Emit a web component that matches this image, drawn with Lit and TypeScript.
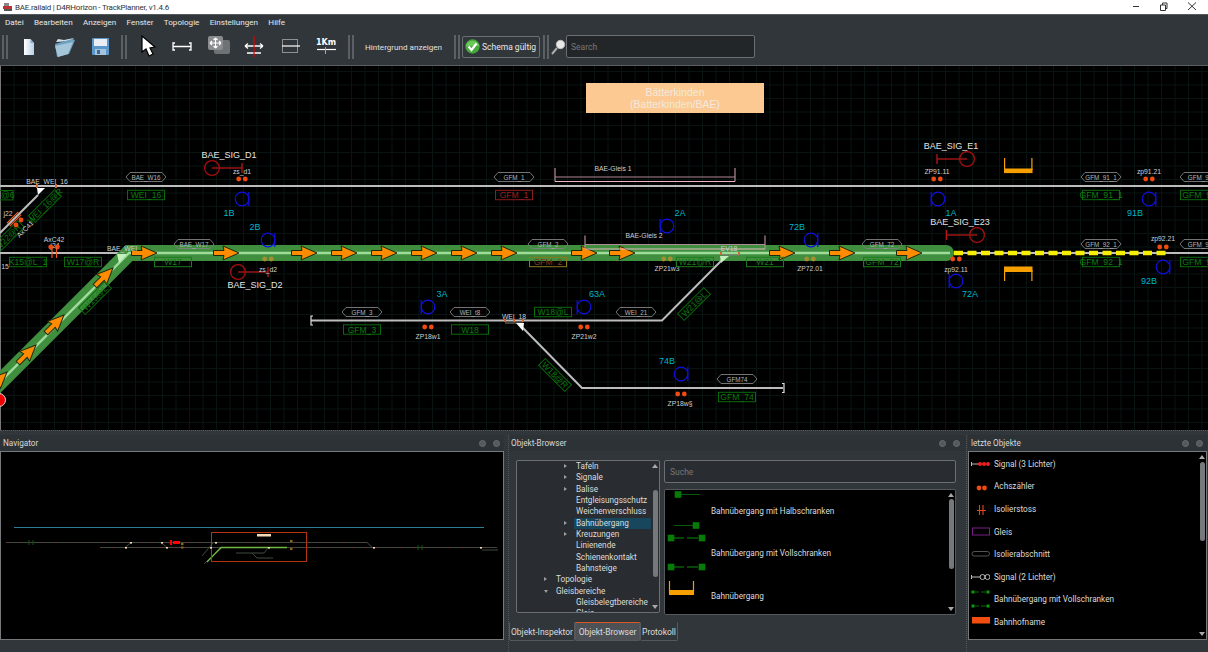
import { LitElement, html, css, svg } from "lit";
import { customElement } from "lit/decorators.js";

const label = (x: number, y: number, s: string, cls = "lbl") =>
  svg`<text x=${x} y=${y} class=${cls} text-anchor="middle" dominant-baseline="central">${s}</text>`;

const hex = (cx: number, cy: number, s: string) => svg`
  <polygon class="hex" points="${cx - 20},${cy} ${cx - 16},${cy - 4.5} ${cx + 16},${cy - 4.5} ${cx + 20},${cy} ${cx + 16},${cy + 4.5} ${cx - 16},${cy + 4.5}"/>
  ${label(cx, cy, s, "hext")}`;

const box = (cx: number, cy: number, s: string, kind = "g", rot = 0) => svg`
  <g transform="translate(${cx} ${cy}) rotate(${rot})">
    <rect class="box-${kind}" x="-18.5" y="-4.7" width="37" height="9.4"/>
    <text class="boxt-${kind}" text-anchor="middle" dominant-baseline="central">${s}</text>
  </g>`;

const dots = (cx: number, cy: number, cls = "dot") => svg`
  <circle class=${cls} cx=${cx - 3.3} cy=${cy} r="2.4"/><circle class=${cls} cx=${cx + 3.3} cy=${cy} r="2.4"/>`;

const balise = (cx: number, cy: number, side: number, s: string, lx: number, ly: number) => svg`
  <circle class="bal" cx=${cx} cy=${cy} r="6.8"/>
  <line class="bal" x1=${cx + side * 6.8} x2=${cx + side * 6.8} y1=${cy - 7} y2=${cy + 7}/>
  ${label(lx, ly, s, "cy")}`;

const signal = (cx: number, cy: number, barX: number, name: string, nx: number, ny: number) => svg`
  <line class="sig" x1=${barX} x2=${cx} y1=${cy} y2=${cy}/>
  <line class="sig" x1=${barX} x2=${barX} y1=${cy - 5} y2=${cy + 5}/>
  <circle class="sigc" cx=${cx} cy=${cy} r="7.4"/>
  ${label(nx, ny, name, "sign")}`;

const arrow = (x: number, y: number, rot = 0) => svg`
  <path class="arr" transform="translate(${x} ${y}) rotate(${rot})" d="M0,0 L-16,-7 L-15,-2.5 L-25.5,-2.5 L-25.5,2.5 L-15,2.5 L-16,7 Z"/>`;

const endcap = (x: number, y: number, dir: number) => svg`
  <path class="cap" d="M${x + dir * 2},${y - 4.5} H${x} V${y + 4.5} H${x + dir * 2}"/>`;

const bracket = (x1: number, x2: number, y: number) => svg`
  <path class="pl1" d="M${x1},${y - 9} V${y + 4.5} M${x2},${y - 9} V${y + 4.5} M${x1},${y} H${x2}"/>
  <path class="pl2" d="M${x1},${y + 4.5} H${x2}"/>`;

const sq = (x: number, y: number) => svg`<rect class="gs" x=${x - 3.3} y=${y - 3.3} width="6.6" height="6.6"/>`;

const TREE: [string, number, string][] = [
  ["Tafeln", 2, "r"], ["Signale", 2, "r"], ["Balise", 2, "r"], ["Entgleisungsschutz", 2, ""],
  ["Weichenverschluss", 2, ""], ["Bahnübergang", 2, "r"], ["Kreuzungen", 2, "r"], ["Linienende", 2, ""],
  ["Schienenkontakt", 2, ""], ["Bahnsteige", 2, ""], ["Topologie", 1, "r"], ["Gleisbereiche", 1, "d"],
  ["Gleisbelegtbereiche", 2, ""], ["Gleis", 2, ""],
];

const NAVMARKS: [number, number][] = [[130, 542], [125, 547], [161, 542], [166, 547], [210, 547], [215, 542], [268, 547], [373, 547], [480, 547]];

@customElement("app-root")
export class AppRoot extends LitElement {
  static styles = css`
    :host { display: block; width: 1208px; height: 652px; overflow: hidden; background: #31363b;
      font-family: Roboto, "Liberation Sans", Arial, sans-serif; font-size: 8.2px; color: #eff0f1; }
    .root { display: flex; flex-direction: column; width: 1208px; height: 652px; }
    .title { height: 14px; background: #fff; color: #333; display: flex; align-items: center; padding-left: 3px; gap: 2px; flex: none; font-size: 8px; letter-spacing: -0.22px; }
    .title .grow { flex: 1; }
    .title svg { display: block; }
    .winbtns { display: flex; }
    .winbtns svg { width: 29px; height: 14px; }
    .menu { height: 13px; border-top: 1px solid #55585b; background: #31363b; display: flex; align-items: center; padding-left: 5px; gap: 10.3px; flex: none; color: #e8e8e8; font-size: 8.1px; }
    .tool { height: 37px; border-bottom: 1px solid #5a5e62; background: #31363b; display: flex; align-items: center; flex: none; position: relative; }
    .sep { width: 2px; height: 24px; border-left: 2px solid #5c6064; border-right: 2px solid #5c6064; flex: none; background: #31363b; box-sizing: content-box; }
    .icons { display: flex; align-items: center; }
    .icons svg { display: block; flex: none; }
    .spacer { width: 2px; flex: none; }
    .gap4 { margin-left: 4px; }
    .gap2 { margin-left: 2px; }
    .gap1 { margin-left: 1px; }
    .bg-lbl { width: 97px; text-align: center; flex: none; color: #e0e0e0; font-size: 8.1px; }
    .schema { width: 78px; height: 22px; margin: 0 3px 0 2px; border: 1px solid #6b6f73; border-radius: 2px; display: flex; align-items: center; gap: 2px; padding-left: 2px; box-sizing: border-box; flex: none; color: #e8e8e8; white-space: nowrap; font-size: 8.5px; }
    .mag { margin-left: 2px; flex: none; }
    .search { width: 189px; height: 23px; background: #232629; border: 1px solid #6b6f73; border-radius: 2px; box-sizing: border-box; display: flex; align-items: center; padding-left: 4px; color: #777; flex: none; font-size: 8.5px; }
    .canvas { height: 364px; flex: none; display: block; background: #000; width: 1208px; }
    .docks { flex: 1; display: flex; min-height: 0; border-top: 1px dotted #555a5e; box-sizing: border-box; padding-top: 4px; }
    .panel { display: flex; flex-direction: column; flex: none; height: 100%; box-sizing: border-box; }
    .nav { width: 504px; }
    .browser { width: 458px; margin-left: 4px; padding-left: 1px; border-left: 1px dotted #50555a; }
    .last { width: 241px; border-left: 1px dotted #50555a; padding-left: 1px; }
    .phead { height: 16px; flex: none; display: flex; align-items: center; justify-content: space-between; padding: 0 4px 0 3px; background: #2d3237; color: #d8d8d8; }
    .browser .phead { padding: 0 6px 0 1px; }
    .pbtns { display: flex; gap: 7px; }
    .pbtn { width: 7px; height: 7px; border-radius: 50%; background: #55595d; border: 1.5px solid #696d71; box-sizing: border-box; }
    .frame { height: 189px; flex: none; background: #000; border: 1px solid #76797c; box-sizing: border-box; position: relative; overflow: hidden; }
    .frame svg { display: block; }
    .frame-r { width: 239px; }
    .bbody { height: 171px; flex: none; display: flex; padding: 9px 8px 0 6px; gap: 4px; box-sizing: border-box; }
    .tree { width: 144px; height: 153px; flex: none; background: #292d31; border: 1px solid #6b6f73; border-radius: 2px; box-sizing: border-box; display: flex; overflow: hidden; }
    .rows { flex: 1; min-width: 0; overflow: hidden; }
    .row { height: 11.33px; line-height: 11.33px; position: relative; color: #dcdcdc; white-space: nowrap; }
    .row.sel { background: #18465d; margin-left: 57px; }
    .row.l2 { padding-left: 59px; }
    .row.l1 { padding-left: 39px; }
    .row.sel.l2 { padding-left: 2px; }
    .tw { position: absolute; top: 3px; width: 0; height: 0; }
    .tw.r { border-left: 3px solid #9a9da0; border-top: 2.5px solid transparent; border-bottom: 2.5px solid transparent; }
    .tw.d { border-top: 3px solid #9a9da0; border-left: 2.5px solid transparent; border-right: 2.5px solid transparent; top: 4px; }
    .sbar { width: 8px; flex: none; position: relative; }
    .thumb { width: 5px; background: #76797c; border-radius: 3px; position: absolute; left: 1.5px; }
    .t1 { top: 29px; height: 87px; }
    .t2 { top: 9px; height: 70px; }
    .t3 { top: 10px; height: 79px; }
    .up { position: absolute; top: 3px; left: 1px; width: 0; height: 0; border-left: 3px solid transparent; border-right: 3px solid transparent; border-bottom: 4px solid #a8a8a8; }
    .down { position: absolute; bottom: 3px; left: 1px; width: 0; height: 0; border-left: 3px solid transparent; border-right: 3px solid transparent; border-top: 4px solid #a8a8a8; }
    .bright { width: 292px; flex: none; display: flex; flex-direction: column; gap: 6px; }
    .suche { height: 23px; flex: none; background: #292d31; border: 1px solid #6b6f73; border-radius: 2px; box-sizing: border-box; display: flex; align-items: center; padding-left: 5px; color: #777; font-size: 8.5px; }
    .list { height: 126px; flex: none; background: #000; border: 1px solid #55585c; border-radius: 2px; box-sizing: border-box; display: flex; }
    .litems { flex: 1; display: flex; flex-direction: column; min-width: 0; }
    .litem { height: 42.7px; display: flex; align-items: center; gap: 5px; flex: none; color: #dcdcdc; }
    .litem.first { height: 42px; }
    .litem svg { flex: none; display: block; }
    .tabs { display: flex; margin-left: -1px; height: 19px; flex: none; font-size: 8.5px; }
    .tab { height: 19px; border: 1px solid #55595d; border-top: 1px solid #31363b; box-sizing: border-box; display: flex; align-items: center; justify-content: center; color: #dcdcdc; border-radius: 0 0 2px 2px; white-space: nowrap; }
    .tab.on { background: #4d5156; border-top: 1px solid #d85a20; }
    .w66 { width: 66px; } .w65 { width: 65px; } .w38 { width: 38px; }
    .rlist { display: flex; height: 100%; }
    .ritems { flex: 1; display: flex; flex-direction: column; padding-top: 0.5px; }
    .ritem { height: 22.6px; flex: none; display: flex; align-items: center; gap: 4px; padding-left: 2px; color: #dcdcdc; }
    .ritem svg { flex: none; display: block; }

    .gridl { stroke: #081412; stroke-width: 1; fill: none; }
    .trk { stroke: #bdbdbd; stroke-width: 2; fill: none; }
    .band { stroke: #3f8f3f; stroke-width: 16; fill: none; stroke-linejoin: miter; stroke-linecap: round; }
    .inner { stroke: #9fdc9a; stroke-width: 2.4; fill: none; }
    .yel { stroke: #f6f000; stroke-width: 4.6; stroke-dasharray: 9 4.5; fill: none; }
    .arr { fill: #ff8c00; stroke: #1c2a10; stroke-width: 1; stroke-linejoin: miter; }
    .hex { fill: none; stroke: #808080; stroke-width: 0.9; }
    .hext { fill: #b4b4b4; font-size: 6.3px; font-family: "Liberation Sans", sans-serif; }
    .lbl { fill: #d0d0d0; font-size: 6.8px; font-family: "Liberation Sans", sans-serif; }
    .cy { fill: #00b4c8; font-size: 9px; font-family: "Liberation Sans", sans-serif; }
    .sign { fill: #e4e4e4; font-size: 9px; font-family: "Liberation Sans", sans-serif; }
    .sig { stroke: #b51818; stroke-width: 1.3; }
    .sigc { fill: none; stroke: #a80e0e; stroke-width: 1.3; }
    .bal { fill: none; stroke: #1010e0; stroke-width: 1.2; }
    .dot { fill: #f04a10; }
    .dotd { fill: #a49030; }
    .box-g { fill: none; stroke: #0a6a0a; stroke-width: 1; }
    .boxt-g { fill: #0d7a0d; font-size: 8.6px; font-family: "Liberation Sans", sans-serif; }
    .box-r { fill: none; stroke: #8a1c1c; stroke-width: 1; }
    .boxt-r { fill: #9a1f1f; font-size: 8.6px; font-family: "Liberation Sans", sans-serif; }
    .box-o { fill: none; stroke: #8a7a20; stroke-width: 1; }
    .boxt-o { fill: #8a3a20; font-size: 8.6px; font-family: "Liberation Sans", sans-serif; }
    .box-s { fill: none; stroke: #1b7a1b; stroke-width: 1; }
    .boxt-s { fill: #1b7a1b; font-size: 8.6px; font-family: "Liberation Sans", sans-serif; }
    .pl1 { fill: none; stroke: #b08a96; stroke-width: 1.2; }
    .pl2 { fill: none; stroke: #e8b8c2; stroke-width: 1; }
    .cap { fill: none; stroke: #ddd; stroke-width: 1.2; }
    .ub { fill: #f5a000; }
    .ubl { stroke: #f5a000; stroke-width: 1.2; }
    .stn { fill: #fdc992; }
    .stnt { fill: #f0e9dd; font-size: 10.5px; font-family: "Liberation Sans", sans-serif; }
    .iso { stroke: #f05a20; stroke-width: 1.2; }
    .sw { fill: #fff; }
    .swg { fill: #c4f0bc; }
    .tick { fill: #d06a30; }
    .swb { fill: none; stroke: #808080; stroke-width: 1; }
    .gs { fill: #087a08; }
    .gl { stroke: #075a07; stroke-width: 1; }
    .gl2 { stroke: #0a8a0a; stroke-width: 1; }
    .nl1 { stroke: #2c7f92; stroke-width: 1; }
    .nl2 { stroke: #3e4a3e; stroke-width: 1; fill: none; }
    .nl3 { stroke: #5a3a38; stroke-width: 1; stroke-dasharray: 3 9; fill: none; }
    .nl4 { stroke: #70b840; stroke-width: 1.3; fill: none; }
    .nb { fill: none; stroke: #b5340f; stroke-width: 1; }
    .nw { fill: #f2d9b8; }
    .nred { fill: #f00; }
    .nor { fill: #8a6a10; }
    .ng { stroke: #0a5a0a; fill: none; }
    .ico-w { stroke: #fff; fill: none; }
    .kmt { fill: #fff; font-size: 8px; font-weight: 700; font-family: "DejaVu Sans", sans-serif; }
    .redl { stroke: #e00000; stroke-width: 1.2; }
  `;

  private track() {
    const g: unknown[] = [];
    for (let x = 0.5; x < 1208; x += 13.5) g.push(svg`<line class="gridl" x1=${x} x2=${x} y1="66" y2="430"/>`);
    for (let y = 71.5; y < 430; y += 13.5) g.push(svg`<line class="gridl" x1="0" x2="1208" y1=${y} y2=${y}/>`);
    const tips = [157, 239, 317, 357, 397, 437, 477, 517, 597, 635, 795, 855, 922];
    return svg`
    <svg class="canvas" viewBox="0 66 1208 364" width="1208" height="364">
      ${g}
      <line x1="0.5" x2="0.5" y1="66" y2="430" stroke="#777"/>
      <rect class="stn" x="586" y="83" width="178" height="30"/>
      ${label(675, 91.5, "Bätterkinden", "stnt")}${label(675, 103.5, "(Batterkinden/BAE)", "stnt")}

      <line class="trk" x1="0" x2="1208" y1="186" y2="186"/>
      <line class="trk" x1="0" x2="120" y1="253" y2="253"/>
      <line class="trk" x1="950" x2="1208" y1="253" y2="253"/>
      <line class="trk" x1="38" y1="195" x2="0" y2="233"/>

      <polyline class="band" points="-30,412 129,253 946,253"/>
      <polyline class="inner" points="-30,412 129,253 950,253"/>
      <line class="yel" x1="954" x2="1166" y1="253" y2="253"/>
      <polygon class="swg" points="117,254 127,254 119,263"/>
      ${tips.map((x) => arrow(x, 253))}
      ${[[113, 268], [64, 315], [36, 345], [7, 372]].map(([x, y]) => arrow(x, y, -45))}

      <polyline class="trk" points="311,320.5 662,320.5 722,260"/>
      <polyline class="trk" points="521,326 582,388 783,388"/>
      ${endcap(311, 320.5, 1)}${endcap(784, 388, -1)}

      ${bracket(555, 735, 177)}${label(613, 168, "BAE-Gleis 1")}
      ${bracket(585, 765, 244.5)}${label(644, 235, "BAE-Gleis 2")}

      ${label(47, 181, "BAE_WEI_16")}
      <rect class="tick" x="36" y="184" width="2" height="4"/><rect class="tick" x="55" y="184" width="2" height="4"/>
      <polygon class="sw" points="37,188 45,188 38,195"/>
      <rect class="box-g" x="-1" y="190.5" width="14" height="9.4"/><text class="boxt-g" x="1" y="198">@6</text>
      ${hex(146, 177, "BAE_W16")}${box(146, 195, "WEI_16")}
      ${box(45, 206, "WEI_16@R", "g", -45)}${box(8, 237, "W22@R", "g", -45)}
      ${hex(514, 177, "GFM_1")}${box(514, 195, "GFM_1", "r")}

      ${signal(212, 168, 242, "BAE_SIG_D1", 229, 155)}
      ${label(242, 171, "zs_d1")}${dots(242, 179)}
      ${balise(242, 199, 1, "1B", 229, 213)}${balise(268, 240, 1, "2B", 255, 227)}
      ${signal(238, 272, 268, "BAE_SIG_D2", 255, 285)}
      ${label(268, 269, "zs_d2")}${dots(268, 259, "dotd")}

      ${label(8, 213, "j22")}
      <g transform="rotate(-45 14 219)"><line class="iso" x1="6" x2="22" y1="217" y2="217"/><line class="iso" x1="6" x2="22" y1="221" y2="221"/></g>
      <circle class="dot" cx="16" cy="225" r="2.4"/><circle class="dot" cx="21" cy="220" r="2.4"/>
      <text class="lbl" transform="translate(25 229) rotate(-45)" text-anchor="middle" dominant-baseline="central">AxC41</text>
      ${label(54, 239, "AxC42")}${label(55, 245.5, "j24", "lbl")}${dots(54, 247)}
      <line class="iso" x1="52" x2="52" y1="247" y2="258"/><line class="iso" x1="56.5" x2="56.5" y1="247" y2="258"/>
      ${label(5, 266, "15")}${box(28, 262, "K15@L_1")}${box(83, 262, "W17@R")}
      ${label(122, 248, "BAE_WEI")}
      ${hex(194, 244, "BAE_W17")}${box(173, 262, "W17", "s")}
      ${box(95, 298, "W15@L", "g", -45)}
      ${hex(548, 244, "GFM_2")}${box(548, 262, "GFM_2", "o")}

      ${balise(667, 226, -1, "2A", 680, 213)}
      ${label(667, 268.5, "ZP21w3")}${dots(667, 259, "dotd")}
      ${box(695, 262, "W21@R", "s")}${box(765, 262, "W21", "s")}
      ${label(729, 248, "EV18")}
      <path class="swb" d="M721,255 H739"/>
      <rect class="tick" x="720" y="252" width="2" height="3"/><rect class="tick" x="738" y="252" width="2" height="3"/>
      <polygon class="swg" points="720,256 729,256 721,263"/>
      ${box(694, 304, "W21@L", "g", -45)}
      ${balise(811, 240, 1, "72B", 797, 227)}
      ${label(810, 268.5, "ZP72.01")}${dots(810, 259, "dotd")}
      ${hex(882, 244, "GFM_72")}${box(882, 262, "GFM_72", "s")}

      ${signal(967, 159, 937, "BAE_SIG_E1", 951, 146)}
      ${label(937, 171, "ZP91.11")}${dots(937, 179)}
      ${balise(938, 199, -1, "1A", 951, 213)}
      ${signal(977, 235, 946.5, "BAE_SIG_E23", 960, 222)}
      ${dots(956, 259)}${label(956, 269, "zp92.11")}
      ${balise(956, 281, -1, "72A", 970, 294)}

      <rect class="ub" x="1004" y="168.5" width="28.5" height="4.6"/>
      <line class="ubl" x1="1004.6" x2="1004.6" y1="158" y2="170"/><line class="ubl" x1="1031.9" x2="1031.9" y1="158" y2="170"/>
      <rect class="ub" x="1004" y="266.5" width="28.5" height="5.5"/>
      <line class="ubl" x1="1004.6" x2="1004.6" y1="270" y2="281"/><line class="ubl" x1="1031.9" x2="1031.9" y1="270" y2="281"/>

      ${hex(1101, 177, "GFM_91_1")}${box(1101, 195, "GFM_91_1")}
      ${label(1149, 171, "zp91.21")}${dots(1149, 179)}
      ${balise(1149, 199, 1, "91B", 1135, 213)}
      ${hex(1200, 177, "GFM_91")}${box(1199, 195, "GFM_91")}
      ${hex(1101, 244, "GFM_92_1")}${box(1101, 262, "GFM_92_1")}
      ${label(1163, 238, "zp92.21")}${dots(1163, 247)}
      ${balise(1163, 267, 1, "92B", 1149, 281)}
      ${hex(1200, 244, "GFM_92")}${box(1199, 262, "GFM_92")}

      ${hex(362, 312, "GFM_3")}${box(362, 329.5, "GFM_3")}
      ${balise(428, 307, -1, "3A", 442, 294)}${dots(428, 327)}${label(428, 336, "ZP18w1")}
      ${hex(470, 312, "WEI_t8")}${box(470, 329.5, "W18")}
      ${label(514, 316, "WEI_18")}
      <path class="swb" d="M505,323 H523"/>
      <rect class="tick" x="504" y="319" width="2" height="3"/><rect class="tick" x="513" y="319" width="2" height="3"/><rect class="tick" x="522" y="319" width="2" height="3"/>
      <polygon class="sw" points="516,323 524,323 523,331"/>
      ${box(553, 312, "W18@L")}
      ${balise(584, 307, -1, "63A", 597, 294)}${dots(584, 327)}${label(584, 336, "ZP21w2")}
      ${hex(636, 312, "WEI_21")}
      ${box(555, 375, "W18@R", "g", 45)}
      ${balise(681, 374, 1, "74B", 667, 361)}${dots(681, 394)}${label(680, 403.5, "ZP18w§")}
      ${hex(737, 379, "GFM74")}${box(737, 397, "GFM_74")}

      <circle cx="-1" cy="400" r="6.5" fill="#f00000" stroke="#ddd" stroke-width="1"/>
    </svg>`;
  }

  private navigator() {
    return svg`
    <svg width="502" height="187" viewBox="1 452 502 187">
      <line class="nl1" x1="14" x2="484" y1="527.5" y2="527.5"/>
      <line class="nl2" x1="6" x2="367" y1="542.5" y2="542.5"/>
      <line class="nl3" x1="6" x2="367" y1="542.5" y2="542.5"/>
      <line class="nl2" x1="100" x2="497" y1="547.5" y2="547.5"/>
      <line class="nl3" x1="100" x2="497" y1="547.5" y2="547.5"/>
      <polyline class="nl2" points="125,547.5 131,542.5"/>
      <polyline class="nl2" points="161,542.5 167,547.5"/>
      <polyline class="nl2" points="367,542.5 373,548"/>
      <polyline class="nl2" points="202,556 213,543"/>
      <polyline class="nl2" points="204,564 222,547.5"/>
      <polyline class="nl4" points="207,562 221,547.5 287,547.5"/>
      <polyline class="nl2" points="236,553 264,553 268,548"/>
      <polyline class="nl2" points="252,553 257,558 273,558"/>
      <rect class="nb" x="211.5" y="532.5" width="95" height="29"/>
      <rect class="nw" x="257" y="534" width="14" height="2.5"/>
      ${NAVMARKS.map(([x, y]) => svg`<rect class="nw" x=${x} y=${y} width="2" height="1.6"/>`)}
      <rect class="nred" x="170" y="540" width="2" height="5"/><rect class="nred" x="173" y="541" width="7" height="3"/>
      <rect class="nor" x="181" y="543" width="2.5" height="2"/><rect class="nor" x="181" y="546.5" width="2.5" height="2"/>
      <rect class="nor" x="290" y="540" width="2.5" height="2"/><rect class="nor" x="290" y="548" width="2.5" height="2"/>
      <path class="ng" d="M29,540 V545 M33,540 V545 M418,545 V550 M422,545 V550"/>
      <line class="nl2" x1="482" x2="498" y1="550" y2="550"/>
    </svg>`;
  }

  private ritem(icon: unknown, text: string) {
    return html`<div class="ritem"><svg width="19" height="12" viewBox="0 0 19 12">${icon}</svg><span>${text}</span></div>`;
  }

  render() {
    const pb = html`<span class="pbtns"><span class="pbtn"></span><span class="pbtn"></span></span>`;
    return html`<div class="root">
      <div class="title">
        <svg width="10" height="10" viewBox="0 0 10 10"><rect x="0" y="4" width="9" height="3" fill="#b33"/><rect x="1" y="1" width="5" height="3" fill="#888"/><rect x="1" y="7" width="8" height="2" fill="#555"/></svg>
        <span>BAE.railaid | D4RHorizon - TrackPlanner, v1.4.6</span>
        <span class="grow"></span>
        <div class="winbtns">
          <svg viewBox="0 0 29 14"><line x1="12" x2="18" y1="6.5" y2="6.5" stroke="#333"/></svg>
          <svg viewBox="0 0 29 14"><path d="M10.5,5 H15.5 V10.5 H10.5 Z M12.5,5 V3 H17 V8.5 H15.5" fill="none" stroke="#333"/></svg>
          <svg viewBox="0 0 29 14"><path d="M9,2.5 L17,10 M17,2.5 L9,10" stroke="#333" fill="none"/></svg>
        </div>
      </div>
      <div class="menu">
        ${["Datei", "Bearbeiten", "Anzeigen", "Fenster", "Topologie", "Einstellungen", "Hilfe"].map((m) => html`<span>${m}</span>`)}
      </div>
      <div class="tool">
        <span class="spacer"></span><div class="sep"></div>
        <div class="icons">
          <svg width="36" height="37" viewBox="0 0 36 37"><defs><linearGradient id="pg" x1="0" x2="1"><stop offset="0" stop-color="#fff"/><stop offset="1" stop-color="#b8cfe8"/></linearGradient></defs><path d="M16,11 H22.5 L26,15 V27 H16 Z" fill="url(#pg)"/><path d="M22.5,11 V15 H26" fill="#8aa8c8"/></svg>
          <svg width="36" height="37" viewBox="0 0 36 37"><path d="M12,14 L14,11 L20,12 L30,10 L26,13 Z" fill="#cfe0ea"/><path d="M11,16 L28,11 L31,12 L25,26 L13,29 Z" fill="#6ea0c0"/><path d="M11,18 L14,29 L24,26 L29,14 Z" fill="#a4c6d8"/></svg>
          <svg width="37" height="37" viewBox="0 0 37 37"><rect x="12" y="10" width="17" height="17" rx="1" fill="#5a98cc"/><rect x="14" y="11" width="13" height="7" fill="#e8eef4"/><rect x="15" y="21" width="11" height="6" fill="#a8c4dc"/><rect x="17" y="22" width="3" height="4" fill="#3a6a98"/></svg>
        </div>
        <div class="sep gap4"></div>
        <div class="icons gap1">
          <svg width="36" height="37" viewBox="0 0 36 37"><path d="M14,8 L14,24 L18,21 L21,28 L25,26 L22,20 L27,19 Z" fill="#fff" stroke="#000" stroke-width="1.2"/></svg>
          <svg width="36" height="37" viewBox="0 0 36 37"><path d="M11,15 H9 V22 H11 M25,15 H27 V22 H25 M9,18.5 H27" class="ico-w" stroke-width="1.3"/></svg>
          <svg width="36" height="37" viewBox="0 0 36 37"><rect x="14" y="12" width="16" height="14" rx="2" fill="#6f7275"/><rect x="8" y="8" width="15" height="14" rx="2" fill="#8a8d90"/><path d="M15.5,10 V20 M10,15 H21 M15.5,10 l-2,2 M15.5,10 l2,2 M15.5,20 l-2,-2 M15.5,20 l2,-2 M10,15 l2,-2 M10,15 l2,2 M21,15 l-2,-2 M21,15 l-2,2" class="ico-w" stroke-width="1.2"/></svg>
          <svg width="36" height="37" viewBox="0 0 36 37"><path d="M9,18 H27 M9,18 l3,-2.5 M9,18 l3,2.5 M27,18 l-3,-2.5 M27,18 l-3,2.5 M11,25 H25" class="ico-w" stroke-width="1.3"/><line class="redl" x1="18" x2="18" y1="8" y2="29"/></svg>
          <svg width="36" height="37" viewBox="0 0 36 37"><rect x="10.5" y="11.5" width="15" height="13" fill="none" stroke="#8f8f8f"/><line x1="10" x2="28" y1="18" y2="18" stroke="#fff" stroke-width="1.2"/></svg>
          <svg width="36" height="37" viewBox="0 0 36 37"><text class="kmt" x="18" y="17" text-anchor="middle">1Km</text><line x1="9" x2="28" y1="21.5" y2="21.5" stroke="#fff" stroke-width="1.2"/><line x1="17.5" x2="17.5" y1="19" y2="26" stroke="#aaa"/></svg>
        </div>
        <div class="sep gap4"></div>
        <div class="bg-lbl gap1">Hintergrund anzeigen</div>
        <div class="sep gap2"></div>
        <div class="schema">
          <svg width="15" height="15" viewBox="0 0 15 15"><circle cx="7.5" cy="7.5" r="7.2" fill="#46a83a"/><path d="M0.8,7 A7,7 0 0 1 14.2,7 Z" fill="#6cc85a"/><path d="M3.5,7.5 L6.5,11 L11.5,4.5" fill="none" stroke="#fff" stroke-width="2.2"/></svg>
          <span>Schema gültig</span>
        </div>
        <div class="sep"></div>
        <svg class="mag" width="15" height="20" viewBox="0 0 15 20"><circle cx="9.5" cy="7.5" r="4.2" fill="#e8e8e8" stroke="#bbb"/><line x1="6" x2="1" y1="11" y2="17" stroke="#aaa" stroke-width="2"/></svg>
        <div class="search">Search</div>
      </div>
      ${this.track()}
      <div class="docks">
        <div class="panel nav">
          <div class="phead"><span>Navigator</span>${pb}</div>
          <div class="frame">${this.navigator()}</div>
        </div>
        <div class="panel browser">
          <div class="phead"><span>Objekt-Browser</span>${pb}</div>
          <div class="bbody">
            <div class="tree">
              <div class="rows">
                ${TREE.map(([t, l, tw], i) => html`<div class="row l${l} ${i === 5 ? "sel" : ""}">
                  ${tw ? html`<span class="tw ${tw}" style="left:${i === 5 ? -10 : l === 2 ? 47 : 27}px"></span>` : ""}${t}</div>`)}
              </div>
              <div class="sbar"><span class="up"></span><span class="thumb t1"></span><span class="down"></span></div>
            </div>
            <div class="bright">
              <div class="suche">Suche</div>
              <div class="list">
                <div class="litems">
                  <div class="litem first"><svg width="41" height="40" viewBox="0 0 41 40">${sq(13, 3.5)}<line class="gl" x1="16" x2="35" y1="3.5" y2="3.5"/>${sq(31, 34.5)}<line class="gl" x1="9" x2="28" y1="34.5" y2="34.5"/></svg><span>Bahnübergang mit Halbschranken</span></div>
                  <div class="litem"><svg width="41" height="40" viewBox="0 0 41 40">${sq(6, 5)}<line class="gl2" x1="9" x2="19" y1="5" y2="5"/><line class="gl2" x1="22" x2="33" y1="5" y2="5"/>${sq(37, 5)}${sq(6, 34)}<line class="gl2" x1="9" x2="19" y1="34" y2="34"/><line class="gl2" x1="22" x2="33" y1="34" y2="34"/>${sq(37, 34)}</svg><span>Bahnübergang mit Vollschranken</span></div>
                  <div class="litem"><svg width="41" height="30" viewBox="0 0 41 30"><rect class="ub" x="4" y="9" width="25" height="5"/><line class="ubl" x1="4.5" x2="4.5" y1="0" y2="12"/><line class="ubl" x1="28.5" x2="28.5" y1="0" y2="12"/></svg><span>Bahnübergang</span></div>
                </div>
                <div class="sbar"><span class="up"></span><span class="thumb t2"></span><span class="down"></span></div>
              </div>
            </div>
          </div>
          <div class="tabs">
            <div class="tab w66">Objekt-Inspektor</div>
            <div class="tab on w65">Objekt-Browser</div>
            <div class="tab w38">Protokoll</div>
          </div>
        </div>
        <div class="panel last">
          <div class="phead"><span>letzte Objekte</span>${pb}</div>
          <div class="frame frame-r">
            <div class="rlist">
              <div class="ritems">
                ${this.ritem(svg`<line x1="0.5" x2="0.5" y1="4" y2="8" stroke="#bbb"/><line x1="0" x2="8" y1="6" y2="6" stroke="#bbb"/><circle cx="9" cy="6" r="2" fill="#f02020"/><circle cx="13" cy="6" r="2" fill="#f02020"/><circle cx="17" cy="6" r="2" fill="#f02020"/>`, "Signal (3 Lichter)")}
                ${this.ritem(svg`<circle cx="8" cy="8" r="2.4" fill="#f04a10"/><circle cx="13.5" cy="8" r="2.4" fill="#f04a10"/>`, "Achszähler")}
                ${this.ritem(svg`<path d="M8.5,2 V12 M12,2 V12 M6,7.5 H15" stroke="#e0451a" stroke-width="1.1" fill="none"/>`, "Isolierstoss")}
                ${this.ritem(svg`<rect x="1.5" y="2" width="17" height="7" fill="none" stroke="#7a1e86"/>`, "Gleis")}
                ${this.ritem(svg`<rect x="1" y="3.5" width="17.5" height="4.5" rx="2.2" fill="none" stroke="#555"/>`, "Isolierabschnitt")}
                ${this.ritem(svg`<line x1="0.5" x2="0.5" y1="4" y2="8" stroke="#bbb"/><line x1="0" x2="9" y1="6" y2="6" stroke="#bbb"/><circle cx="11.5" cy="6" r="2.5" fill="none" stroke="#bbb"/><circle cx="16.5" cy="6" r="2.5" fill="none" stroke="#bbb"/>`, "Signal (2 Lichter)")}
                <div class="ritem"><svg width="19" height="20" viewBox="0 0 19 20">${[[2, 3], [17, 3], [2, 17], [17, 17]].map(([x, y]) => svg`<rect x=${x - 1.5} y=${y - 1.5} width="3" height="3" fill="#0a9a0a"/>`)}<path d="M4,3 H8 M10,3 H15 M4,17 H8 M10,17 H15" stroke="#086a08" fill="none"/></svg><span>Bahnübergang mit Vollschranken</span></div>
                ${this.ritem(svg`<rect x="1" y="1" width="18.5" height="6.5" fill="#f24e10"/>`, "Bahnhofname")}
              </div>
              <div class="sbar"><span class="up"></span><span class="thumb t3"></span><span class="down"></span></div>
            </div>
          </div>
        </div>
      </div>
    </div>`;
  }
}
